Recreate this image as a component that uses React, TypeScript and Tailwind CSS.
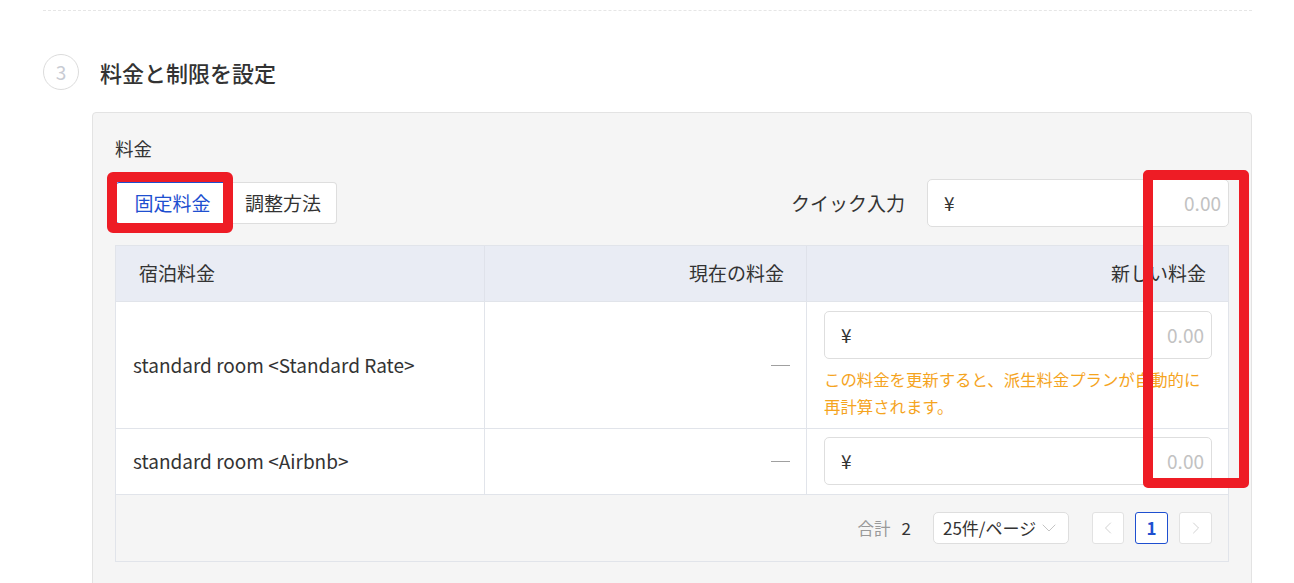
import { ChevronDown, ChevronLeft, ChevronRight } from 'lucide-react';

const font = { fontFamily: '"Noto Sans CJK JP", "Noto Sans", sans-serif' };

function YenInput() {
  return (
    <div className="flex items-center justify-between h-full pl-[16px] pr-[7px] bg-white border border-[#dedede] rounded-[5px]">
      <span className="text-[19px] text-[#333]">¥</span>
      <span className="text-[19px] text-[#c2c2c2]">0.00</span>
    </div>
  );
}

function Dash() {
  return <div className="w-[19px] h-px bg-[#a0a0a0]" />;
}

export default function App() {
  return (
    <div className="relative w-full h-[583px] overflow-hidden bg-white text-[#333]" style={font}>
      <div className="pl-[43px] pr-[42px]">
        <div className="h-[11px] border-b border-dashed border-[#e6e6e6]" />

        {/* section title */}
        <div className="flex items-center mt-[43px] h-[36px]">
          <div className="flex items-center justify-center w-[36px] h-[36px] rounded-full border border-[#dcdcdc] text-[19px] text-[#c8cbd3]">
            3
          </div>
          <h2 className="ml-[21px] text-[22px] font-medium text-[#333] leading-none">料金と制限を設定</h2>
        </div>

        {/* panel */}
        <div className="ml-[49px] mt-[22px] h-[600px] bg-[#f5f5f5] border border-[#e3e3e3] rounded-[4px] px-[22px] pt-[22px]">
          <div className="text-[18.5px] leading-[26px]">料金</div>

          <div className="flex items-center justify-between mt-[18px] h-[48px]">
            <div className="flex items-center h-[42px]">
              <button className="w-[115px] h-full bg-white border border-[#1e4fd0] rounded-l-[4px] text-[19px] text-[#1e4fd0]">
                固定料金
              </button>
              <button className="w-[107px] h-full bg-white border border-l-0 border-[#dedede] rounded-r-[4px] text-[19px] text-[#333]">
                調整方法
              </button>
            </div>
            <div className="flex items-center h-full">
              <span className="text-[19px] mr-[22px]">クイック入力</span>
              <div className="w-[302px] h-[48px]">
                <YenInput />
              </div>
            </div>
          </div>

          {/* table */}
          <div className="mt-[18px] border border-[#e1e4ea] bg-white">
            <div className="grid grid-cols-[368px_322px_1fr] h-[55px] bg-[#e9ecf4] text-[19px]">
              <div className="flex items-center pl-[23px]">宿泊料金</div>
              <div className="flex items-center justify-end pr-[22px] border-l border-[#dfe2ea]">現在の料金</div>
              <div className="flex items-center justify-end pr-[22px] border-l border-[#dfe2ea]">新しい料金</div>
            </div>

            <div className="grid grid-cols-[368px_322px_1fr] h-[127px] border-t border-[#e1e4ea]">
              <div className="flex items-center pl-[17px] text-[19px]">standard room &lt;Standard Rate&gt;</div>
              <div className="flex items-center justify-end pr-[16px] border-l border-[#e1e4ea]">
                <Dash />
              </div>
              <div className="border-l border-[#e1e4ea] pl-[17px] pr-[16px] pt-[9px]">
                <div className="h-[48px]">
                  <YenInput />
                </div>
                <div className="mt-[7px] text-[16.4px] leading-[27px] text-[#f5a41e] whitespace-nowrap">
                  <div>この料金を更新すると、派生料金プランが自動的に</div>
                  <div>再計算されます。</div>
                </div>
              </div>
            </div>

            <div className="grid grid-cols-[368px_322px_1fr] h-[66px] border-t border-[#e1e4ea]">
              <div className="flex items-center pl-[17px] text-[19px]">standard room &lt;Airbnb&gt;</div>
              <div className="flex items-center justify-end pr-[16px] border-l border-[#e1e4ea]">
                <Dash />
              </div>
              <div className="border-l border-[#e1e4ea] pl-[17px] pr-[16px] pt-[8px]">
                <div className="h-[48px]">
                  <YenInput />
                </div>
              </div>
            </div>

            {/* pagination */}
            <div className="flex items-center justify-end h-[67px] pr-[16px] bg-[#f5f5f5] border-t border-[#e1e4ea]">
              <span className="text-[16.5px] text-[#999]">合計</span>
              <span className="ml-[11px] text-[17px] text-[#333]">2</span>
              <div className="flex items-center justify-between ml-[22px] w-[136px] h-[32px] pl-[9px] pr-[7px] bg-white border border-[#dedede] rounded-[5px]">
                <span className="text-[17px] text-[#333]">25件/ページ</span>
                <ChevronDown size={24} strokeWidth={1} className="text-[#c4c4c4]" />
              </div>
              <div className="flex items-center ml-[23px] gap-[11px]">
                <div className="flex items-center justify-center w-[32px] h-[32px] bg-white border border-[#e2e2e2] rounded-[3px]">
                  <ChevronLeft size={20} strokeWidth={1} className="text-[#c8c8c8]" />
                </div>
                <div className="flex items-center justify-center w-[33px] h-[32px] bg-white border border-[#1e4fd0] rounded-[3px] text-[17px] font-semibold text-[#1e4fd0]">
                  1
                </div>
                <div className="flex items-center justify-center w-[33px] h-[32px] bg-white border border-[#e2e2e2] rounded-[3px]">
                  <ChevronRight size={20} strokeWidth={1} className="text-[#c8c8c8]" />
                </div>
              </div>
            </div>
          </div>
        </div>
      </div>

      {/* red annotation frames */}
      <div className="absolute left-[107px] top-[172px] w-[126px] h-[61px] border-[10px] border-[#ee1c25] rounded-[6px]" />
      <div className="absolute left-[1143px] top-[170px] w-[106px] h-[318px] border-[10px] border-[#ee1c25] rounded-[5px]" />
    </div>
  );
}
